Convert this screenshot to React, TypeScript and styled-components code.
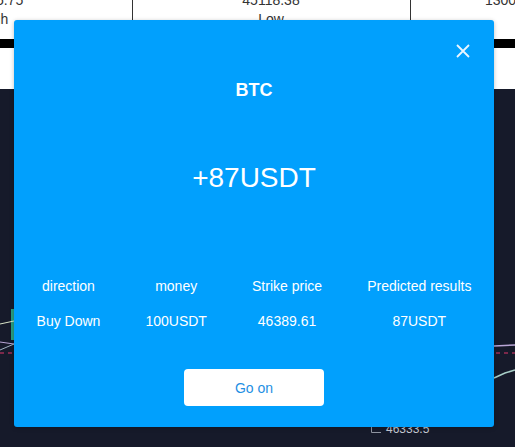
import React from "react";
import styled, { createGlobalStyle } from "styled-components";

const GlobalStyle = createGlobalStyle`
  html, body { margin: 0; padding: 0; background: #ffffff; }
  body { font-family: "Liberation Sans", Arial, sans-serif; overflow: hidden; }
  * { box-sizing: border-box; }
`;

const Page = styled.div`
  width: 515px;
  height: 447px;
  display: flex;
  flex-direction: column;
  overflow: hidden;
  position: relative;
`;

const StatsTable = styled.div`
  height: 39px;
  display: grid;
  grid-template-columns: 132px 278px 1fr;
  overflow: hidden;
`;

const StatCell = styled.div<{ $border?: boolean }>`
  border-left: ${(p) => (p.$border ? "1px solid #333" : "none")};
  position: relative;
  overflow: hidden;
`;

const StatInner = styled.div<{ $offset: number; $align?: string }>`
  margin-left: ${(p) => p.$offset}px;
  width: 80px;
  margin-top: -9px;
  text-align: ${(p) => p.$align || "center"};
  font-size: 14px;
  line-height: 19px;
  color: #333;
  white-space: nowrap;
`;

const BlackBar = styled.div`
  height: 9px;
  background: #000;
`;

const WhiteGap = styled.div`
  height: 41px;
  background: #fff;
`;

const ChartArea = styled.div`
  flex: 1;
  background: #161a2a;
  position: relative;
`;

const ChartSvg = styled.svg`
  display: block;
  width: 515px;
  height: 358px;
`;

const Modal = styled.div`
  position: absolute;
  left: 14px;
  top: 20px;
  width: 480px;
  height: 407px;
  background: #01a0fd;
  border-radius: 3px;
  box-shadow: 0 1px 4px rgba(0, 0, 0, 0.25);
  display: flex;
  flex-direction: column;
  align-items: center;
  padding: 21px 21px 21px;
  color: #fff;
`;

const CloseRow = styled.div`
  align-self: stretch;
  display: flex;
  justify-content: flex-end;
  height: 20px;
`;

const CloseButton = styled.button`
  width: 20px;
  height: 20px;
  padding: 0;
  border: none;
  background: transparent;
  display: flex;
  align-items: center;
  justify-content: center;
  cursor: pointer;
`;

const Symbol = styled.div`
  margin-top: 19px;
  font-size: 18px;
  line-height: 20px;
  font-weight: 700;
`;

const Amount = styled.div`
  margin-top: 62px;
  font-size: 28px;
  line-height: 32px;
`;

const InfoGrid = styled.div`
  margin-top: 82px;
  align-self: stretch;
  margin-left: -21px;
  margin-right: -21px;
  display: flex;
  justify-content: space-around;
`;

const InfoCol = styled.div`
  display: flex;
  flex-direction: column;
  align-items: center;
  gap: 15px;
  font-size: 14px;
  line-height: 20px;
  white-space: nowrap;
`;

const GoButton = styled.button`
  margin-top: 38px;
  width: 140px;
  height: 37px;
  border: none;
  border-radius: 4px;
  background: #fff;
  color: #1f8fe3;
  font-family: "Liberation Sans", Arial, sans-serif;
  font-size: 14px;
  cursor: pointer;
`;

const columns = [
  { label: "direction", value: "Buy Down" },
  { label: "money", value: "100USDT" },
  { label: "Strike price", value: "46389.61" },
  { label: "Predicted results", value: "87USDT" },
];

export default function App() {
  return (
    <>
      <GlobalStyle />
      <Page>
        <StatsTable>
          <StatCell>
            <StatInner $offset={-46}>
              46135.75
              <br />
              High
            </StatInner>
          </StatCell>
          <StatCell $border>
            <StatInner $offset={98}>
              45118.38
              <br />
              Low
            </StatInner>
          </StatCell>
          <StatCell $border>
            <StatInner $offset={74} $align="left">
              13002.5
            </StatInner>
          </StatCell>
        </StatsTable>
        <BlackBar />
        <WhiteGap />
        <ChartArea>
          <ChartSvg viewBox="0 0 515 358">
            <rect x="11" y="220" width="3" height="31" fill="#2a9d7f" />
            <polyline points="0,235 14,232" stroke="#d9e3c8" strokeWidth="1" fill="none" />
            <polyline points="0,253 14,255" stroke="#b9a6d6" strokeWidth="1" fill="none" />
            <polyline points="0,261 14,255" stroke="#9fb2c0" strokeWidth="1" fill="none" />
            <line x1="0" y1="264" x2="515" y2="264" stroke="#e0366a" strokeWidth="1" strokeDasharray="4 4" />
            <polyline points="494,257 515,256" stroke="#b9a6d6" strokeWidth="1.5" fill="none" />
            <polyline points="494,289 505,284 515,281" stroke="#a8cfc8" strokeWidth="1.5" fill="none" />
            <polyline points="371.5,336 371.5,343.5 381,343.5" stroke="#8f94a0" strokeWidth="1" fill="none" />
            <text x="386" y="344" fontSize="12" fill="#c5c9d2" fontFamily="Liberation Sans, Arial, sans-serif">
              46333.5
            </text>
          </ChartSvg>
        </ChartArea>
        <Modal>
          <CloseRow>
            <CloseButton aria-label="close">
              <svg width="14" height="14" viewBox="0 0 14 14">
                <path d="M1 1 L13 13 M13 1 L1 13" stroke="#eaf6ff" strokeWidth="1.8" />
              </svg>
            </CloseButton>
          </CloseRow>
          <Symbol>BTC</Symbol>
          <Amount>+87USDT</Amount>
          <InfoGrid>
            {columns.map((c) => (
              <InfoCol key={c.label}>
                <span>{c.label}</span>
                <span>{c.value}</span>
              </InfoCol>
            ))}
          </InfoGrid>
          <GoButton>Go on</GoButton>
        </Modal>
      </Page>
    </>
  );
}
